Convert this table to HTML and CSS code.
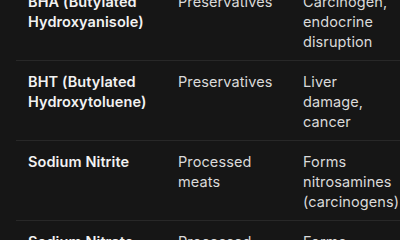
FILE: index.html
```html
<!DOCTYPE html>
<html lang="en">
<head>
  <meta charset="UTF-8">
  <meta name="viewport" content="width=device-width, initial-scale=1.0">
  <title>Harmful Food Additives</title>
  <link rel="stylesheet" href="styles.css">
</head>
<body>

  <!-- Additives Table -->
  <div class="table-wrap">
    <table class="additives">
      <tbody>
        <tr>
          <td class="name">BHA (Butylated Hydroxyanisole)</td>
          <td class="found">Preservatives</td>
          <td class="risk">Carcinogen, endocrine disruption</td>
        </tr>
        <tr>
          <td class="name">BHT (Butylated Hydroxytoluene)</td>
          <td class="found">Preservatives</td>
          <td class="risk">Liver damage, cancer</td>
        </tr>
        <tr>
          <td class="name">Sodium Nitrite</td>
          <td class="found">Processed meats</td>
          <td class="risk">Forms nitrosamines (carcinogens)</td>
        </tr>
        <tr>
          <td class="name">Sodium Nitrate</td>
          <td class="found">Processed meats</td>
          <td class="risk">Forms nitrosamines</td>
        </tr>
      </tbody>
    </table>
  </div>

</body>
</html>
```

FILE: styles.css
```css
/* Basic Reset */
* {
  margin: 0;
  padding: 0;
  box-sizing: border-box;
}

body {
  font-family: 'Inter', 'Noto Sans', sans-serif;
  background-color: #161616;
  color: #dadada;
  font-size: 14.5px;
  letter-spacing: 0.1px;
  line-height: 20px;
  overflow: hidden;
}

/* Table scrolled part way down */
.table-wrap {
  margin-top: -19px;
  padding-left: 16px;
  overflow: hidden;
}

.additives {
  border-collapse: collapse;
  table-layout: fixed;
  width: 384px;
}

.additives td {
  vertical-align: top;
  padding: 11px 12px 8px;
  border-bottom: 1px solid #282828;
  text-align: left;
}

.additives .name {
  width: 150px;
  font-weight: 600;
  color: #f2f2f2;
}

.additives .found {
  width: 125px;
}

.additives .risk {
  width: 109px;
}
```
